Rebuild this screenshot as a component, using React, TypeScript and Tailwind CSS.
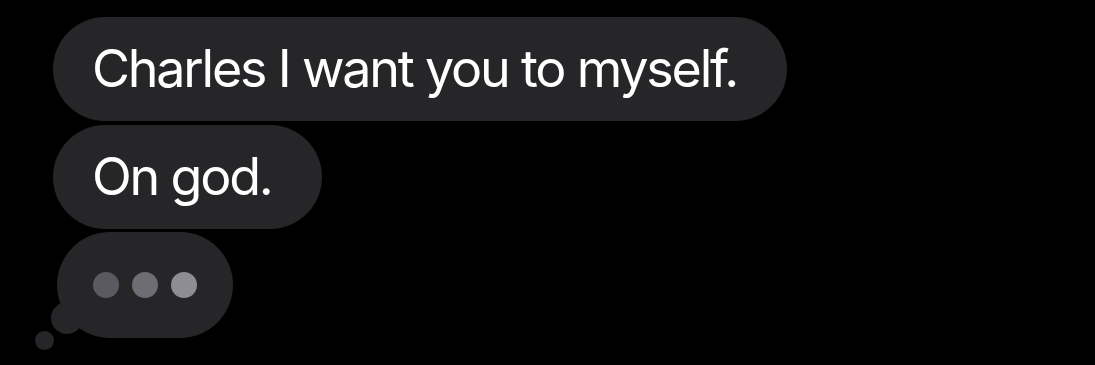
export default function App() {
  return (
    <div
      className="w-[1095px] h-[365px] bg-black overflow-hidden pt-[17px] pl-[53px] flex flex-col items-start"
      style={{ fontFamily: 'Inter, "Noto Sans", sans-serif' }}
    >
      <div className="h-[104px] pl-[39px] pr-[50px] rounded-full bg-[#262629] flex items-center text-white text-[52px] tracking-[-2.2px]">
        Charles I want you to myself.
      </div>
      <div className="mt-[4px] h-[104px] pl-[39px] pr-[50px] rounded-full bg-[#262629] flex items-center text-white text-[52px] tracking-[-2.2px]">
        On god.
      </div>
      <div className="relative mt-[3px] ml-[4px] w-[176px] h-[106px] rounded-full bg-[#262629] flex items-center pl-[36px] gap-[13px]">
        <span className="w-[26px] h-[26px] rounded-full bg-[#5b5a60]" />
        <span className="w-[26px] h-[26px] rounded-full bg-[#6e6d73]" />
        <span className="w-[26px] h-[26px] rounded-full bg-[#8e8d93]" />
        <span className="absolute left-[-6px] top-[70px] w-[32px] h-[32px] rounded-full bg-[#262629]" />
        <span className="absolute left-[-22px] top-[99px] w-[19px] h-[19px] rounded-full bg-[#262629]" />
      </div>
    </div>
  );
}
